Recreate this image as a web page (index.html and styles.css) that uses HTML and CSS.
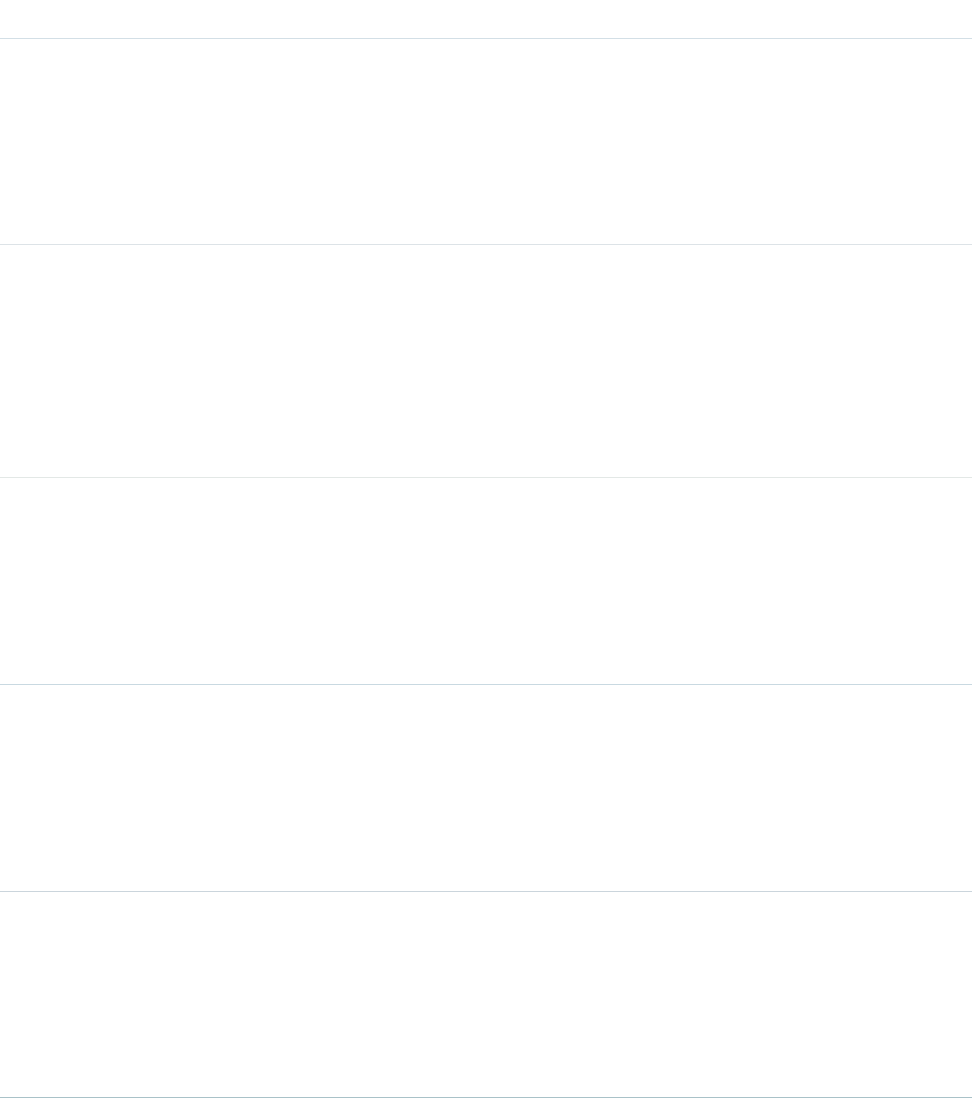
FILE: index.html
```html
<!DOCTYPE html>
<html lang="en">
<head>
<meta charset="utf-8">
<title>Page</title>
<link rel="stylesheet" href="styles.css">
</head>
<body>
<main class="list">
  <div class="row row-top"></div>
  <div class="row row-a"></div>
  <div class="row row-b"></div>
  <div class="row row-c"></div>
  <div class="row row-d"></div>
  <div class="row row-e"></div>
</main>
</body>
</html>
```
FILE: styles.css
```css
html, body {
  margin: 0;
  padding: 0;
  background: #ffffff;
  font-family: "Liberation Sans", Arial, sans-serif;
}
.list {
  width: 972px;
  display: flex;
  flex-direction: column;
}
.row {
  border-bottom: 1px solid #d6e0e6;
}
.row-top { height: 38px; border-bottom-color: #d3dfe6; }
.row-a { height: 205px; border-bottom-color: #dde3e7; }
.row-b { height: 232px; border-bottom-color: #e3e8e6; }
.row-c { height: 206px; border-bottom-color: #c9d9e1; }
.row-d { height: 206px; border-bottom-color: #cbd5dc; }
.row-e { height: 205px; border-bottom-color: #a9c2c8; }
```
